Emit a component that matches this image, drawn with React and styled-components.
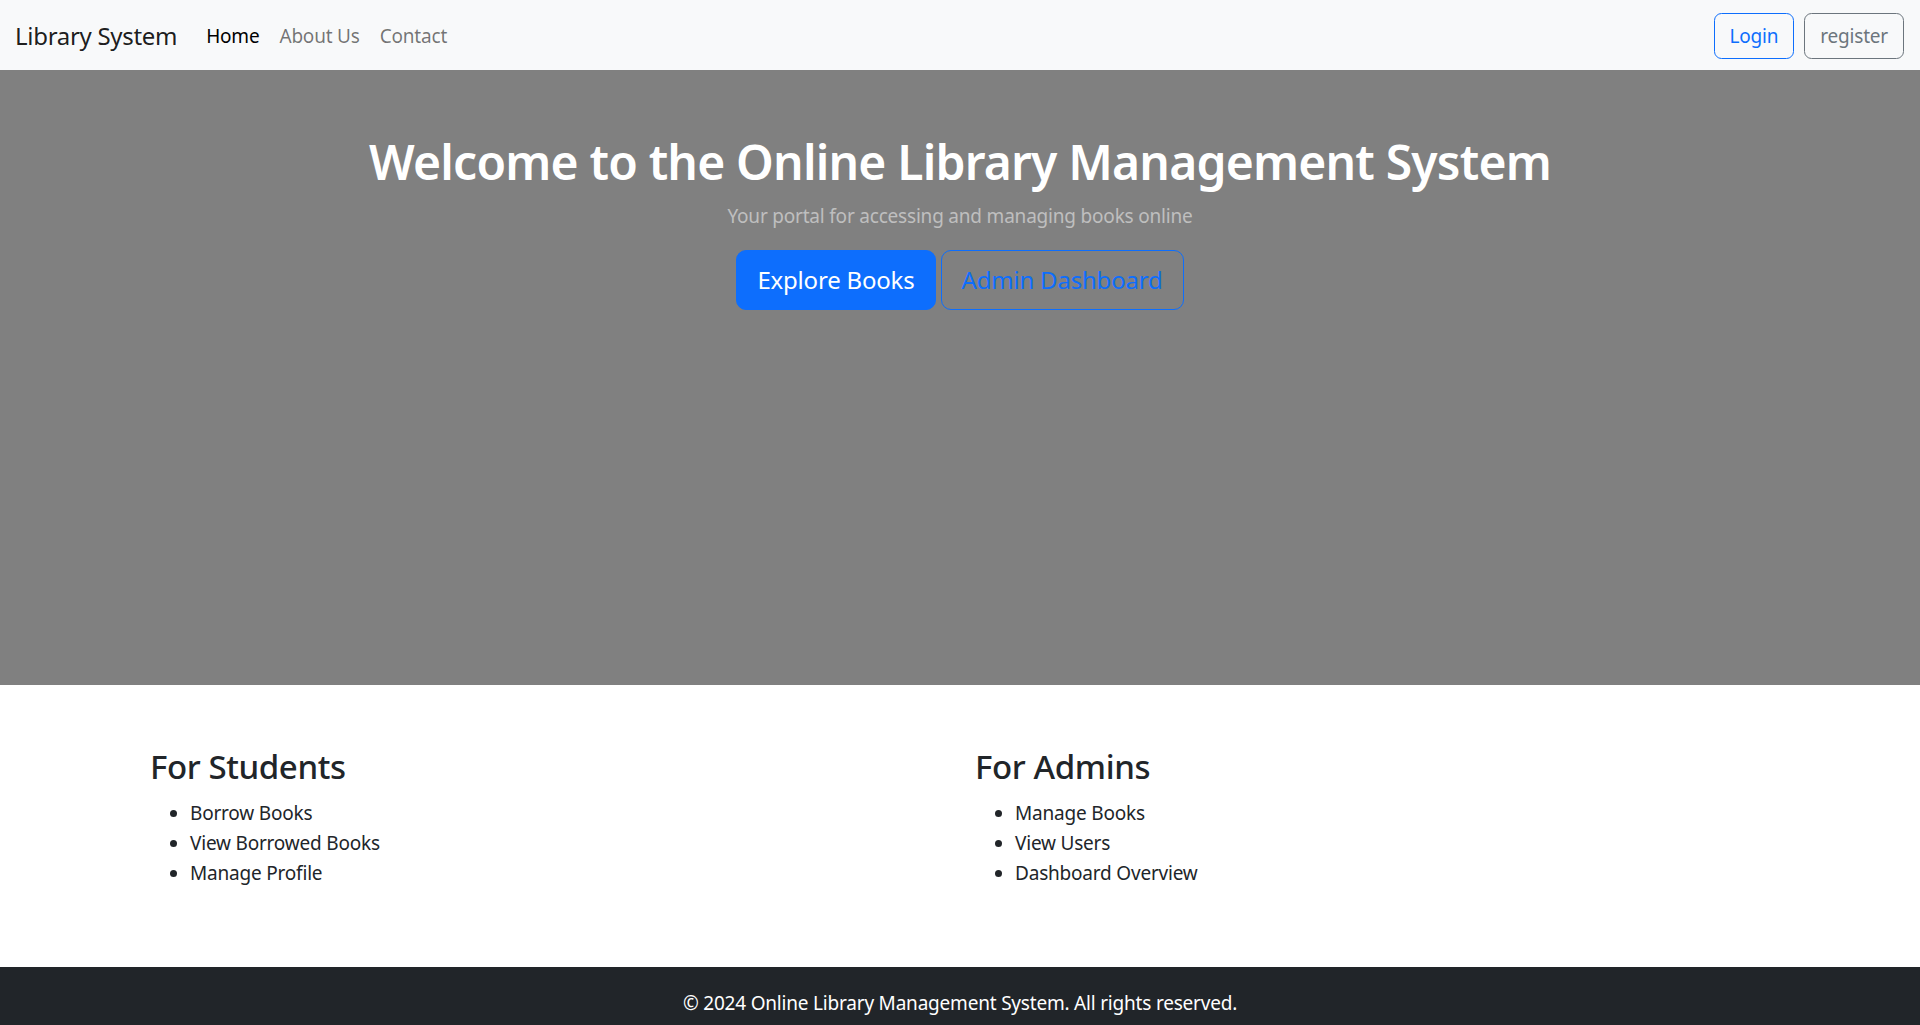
import React from 'react';
import styled, { createGlobalStyle } from 'styled-components';

const GlobalStyle = createGlobalStyle`
  *, *::before, *::after {
    box-sizing: border-box;
  }
  body {
    margin: 0;
    font-family: "Segoe UI", "Noto Sans", "Open Sans", sans-serif;
    font-size: 19px;
    letter-spacing: -0.2px;
    line-height: 30px;
    color: #212529;
    background: #fff;
  }
`;

const Navbar = styled.nav`
  height: 70px;
  background-color: #f8f9fa;
  display: flex;
  align-items: center;
  justify-content: space-between;
  padding: 1px 16px 0 15px;
`;

const NavLeft = styled.div`
  display: flex;
  align-items: center;
`;

const Brand = styled.a`
  font-size: 24px;
  letter-spacing: -0.3px;
  color: rgba(0, 0, 0, 0.9);
  text-decoration: none;
  margin-right: 19px;
  line-height: 37px;
`;

const NavLinks = styled.ul`
  display: flex;
  list-style: none;
  margin: 0;
  padding: 0;
`;

const NavLink = styled.a`
  display: block;
  padding: 10px;
  text-decoration: none;
  color: ${(p) => (p.$active ? 'rgba(0, 0, 0, 1)' : 'rgba(0, 0, 0, 0.55)')};
`;

const NavRight = styled.div`
  display: flex;
  align-items: center;
  gap: 10px;
`;

const Button = styled.button`
  font-family: inherit;
  letter-spacing: inherit;
  font-size: ${(p) => (p.$large ? '24px' : '19px')};
  line-height: ${(p) => (p.$large ? '38px' : '30px')};
  padding: ${(p) => (p.$large ? '10px 20px' : '7px 15px')};
  border-radius: ${(p) => (p.$large ? '10px' : '7.5px')};
  border: 1px solid ${(p) => p.$color};
  background: ${(p) => (p.$solid ? p.$color : 'transparent')};
  color: ${(p) => (p.$solid ? '#fff' : p.$color)};
  cursor: pointer;
`;

const Hero = styled.header`
  height: 615px;
  background-color: #808080;
  color: #fff;
  text-align: center;
  padding-top: 56px;
`;

const HeroTitle = styled.h1`
  font-size: 48px;
  font-weight: 600;
  letter-spacing: -0.8px;
  line-height: 72px;
  margin: 0 0 3px;
`;

const HeroLead = styled.p`
  margin: 0 0 19px;
  color: rgba(255, 255, 255, 0.5);
`;

const HeroActions = styled.div`
  display: flex;
  justify-content: center;
  gap: 5px;
`;

const Features = styled.section`
  max-width: 1650px;
  margin: 0 auto;
  padding: 61px 0 59px;
  display: grid;
  grid-template-columns: 1fr 1fr;
`;

const FeatureColumn = styled.div`
  padding: 0 15px;
`;

const FeatureTitle = styled.h3`
  font-size: 33px;
  font-weight: 500;
  letter-spacing: -0.4px;
  line-height: 42px;
  margin: 0 0 10px;
`;

const FeatureList = styled.ul`
  margin: 0 0 20px;
  padding-left: 40px;
`;

const Footer = styled.footer`
  background-color: #212529;
  color: #fff;
  text-align: center;
  padding: 21px 0 20px;
`;

const FooterText = styled.p`
  margin: 0;
`;

const features = [
  { title: 'For Students', items: ['Borrow Books', 'View Borrowed Books', 'Manage Profile'] },
  { title: 'For Admins', items: ['Manage Books', 'View Users', 'Dashboard Overview'] },
];

export default function App() {
  return (
    <>
      <GlobalStyle />
      <Navbar>
        <NavLeft>
          <Brand href="#">Library System</Brand>
          <NavLinks>
            <li><NavLink href="#" $active>Home</NavLink></li>
            <li><NavLink href="#">About Us</NavLink></li>
            <li><NavLink href="#">Contact</NavLink></li>
          </NavLinks>
        </NavLeft>
        <NavRight>
          <Button $color="#0d6efd">Login</Button>
          <Button $color="#6c757d">register</Button>
        </NavRight>
      </Navbar>
      <Hero>
        <HeroTitle>Welcome to the Online Library Management System</HeroTitle>
        <HeroLead>Your portal for accessing and managing books online</HeroLead>
        <HeroActions>
          <Button $large $solid $color="#0d6efd">Explore Books</Button>
          <Button $large $color="#0d6efd">Admin Dashboard</Button>
        </HeroActions>
      </Hero>
      <Features>
        {features.map((f) => (
          <FeatureColumn key={f.title}>
            <FeatureTitle>{f.title}</FeatureTitle>
            <FeatureList>
              {f.items.map((item) => (
                <li key={item}>{item}</li>
              ))}
            </FeatureList>
          </FeatureColumn>
        ))}
      </Features>
      <Footer>
        <FooterText>© 2024 Online Library Management System. All rights reserved.</FooterText>
      </Footer>
    </>
  );
}
